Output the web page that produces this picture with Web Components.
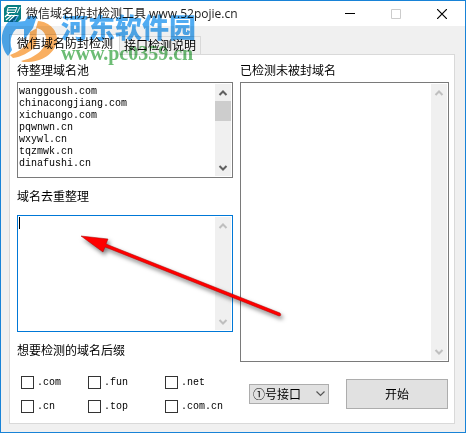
<!DOCTYPE html>
<html lang="zh-CN">
<head>
<meta charset="UTF-8">
<meta name="viewport" content="width=device-width, initial-scale=1">
<title>微信域名防封检测工具</title>
<style>
  body {
    margin: 0;
    font: 12px/16px "Liberation Sans", "Noto Sans CJK SC", sans-serif;
    color: #000;
  }
</style>
</head>
<body>
<app-window heading="微信域名防封检测工具 www.52pojie.cn">
  <tab-panel>
    <div slot="left">
      <text-field label="待整理域名池" style="--field-height: 96px" thumb>wanggoush.com
chinacongjiang.com
xichuango.com
pqwnwn.cn
wxywl.cn
tqzmwk.cn
dinafushi.cn</text-field>
      <text-field label="域名去重整理" style="--field-height: 117px; --label-gap: 10px" active></text-field>
      <suffix-group label="想要检测的域名后缀" options=".com,.fun,.net,.cn,.top,.com.cn"></suffix-group>
    </div>
    <div slot="right">
      <text-field label="已检测未被封域名" style="--field-height: 280px"></text-field>
      <action-bar></action-bar>
    </div>
  </tab-panel>
  <site-mark slot="overlay"></site-mark>
  <pointer-arrow slot="overlay"></pointer-arrow>
</app-window>

<script>
class AppWindow extends HTMLElement {
  constructor() {
    super();
    this.attachShadow({ mode: 'open' });
  }

  connectedCallback() {
    this.shadowRoot.innerHTML = `
      <style>
        :host {
          display: flex;
          flex-direction: column;
          position: relative;
          box-sizing: border-box;
          min-height: 100vh;
          border: 1px solid #1883d7;
          background: #f0f0f0;
        }
        header {
          display: flex;
          align-items: center;
          height: 25px;
          padding-left: 3px;
          background: #fff;
        }
        h1 {
          flex: 1;
          margin: 0 0 0 5px;
          font: 12px/16px "Open Sans", "Noto Sans CJK SC", sans-serif;
          color: #222;
          white-space: nowrap;
        }
        button {
          width: 46px;
          height: 25px;
          padding: 0;
          border: 0;
          background: none;
        }
        button svg { display: block; margin: auto; }
        main { padding: 8px 10px 7px 8px; }
      </style>
      <header>
        <svg width="17" height="17" viewBox="0 0 17 17" aria-hidden="true">
          <path d="M0 3L3 0H17V14L14 17H0Z" fill="#087f83"/>
          <path d="M4 2.500H13L11 7.500H3ZM4 5H12" fill="none" stroke="#fff"/>
          <path d="M5 8L1 12M3 10.500H14L11 16H9M8 10L2 15M11 10L5 16" fill="none" stroke="#fff" stroke-width="1.200"/>
          <path d="M16 2L13 8" stroke="#fff"/>
        </svg>
        <h1>${this.getAttribute('heading')}</h1>
        <button aria-label="最小化"><svg width="10" height="10"><path d="M0 4.5H10" stroke="#000"/></svg></button>
        <button aria-label="最大化" disabled><svg width="10" height="10"><path d="M.5 .5H9.5V9.5H.5Z" fill="none" stroke="#ccc"/></svg></button>
        <button aria-label="关闭"><svg width="10" height="10"><path d="M0 0L10 10M10 0L0 10" stroke="#000" stroke-width="1.2"/></svg></button>
      </header>
      <main><slot></slot></main>
      <slot name="overlay"></slot>
    `;
  }
}

class TabPanel extends HTMLElement {
  constructor() {
    super();
    this.attachShadow({ mode: 'open' });
  }

  connectedCallback() {
    this.shadowRoot.innerHTML = `
      <style>
        :host { display: block; }
        nav { display: flex; align-items: flex-end; }
        button {
          height: 18px;
          padding: 1px 4px 0;
          border: 1px solid #d9d9d9;
          border-bottom: 0;
          border-left: 0;
          background: #f0f0f0;
          font: inherit;
          color: inherit;
          white-space: nowrap;
        }
        button[aria-selected="true"] {
          height: 21px;
          margin-bottom: -1px;
          padding: 0 6px 2px 7px;
          border-left: 1px solid #d9d9d9;
          background: #fff;
          position: relative;
        }
        section {
          display: grid;
          grid-template-columns: 216fr 209fr;
          gap: 7px;
          padding: 8px 5px 10px 7px;
          border: 1px solid #d9d9d9;
          background: #fff;
        }
        ::slotted(div) {
          display: flex;
          flex-direction: column;
          gap: 11px;
          min-width: 0;
        }
      </style>
      <nav role="tablist">
        <button role="tab" aria-selected="true">微信域名防封检测</button>
        <button role="tab" aria-selected="false">接口检测说明</button>
      </nav>
      <section role="tabpanel">
        <slot name="left"></slot>
        <slot name="right"></slot>
      </section>
    `;
  }
}

class ScrollTrack extends HTMLElement {
  constructor() {
    super();
    this.attachShadow({ mode: 'open' });
  }

  connectedCallback() {
    this.shadowRoot.innerHTML = `
      <style>
        :host {
          display: flex;
          flex-direction: column;
          flex: none;
          width: 16px;
          margin: 1px;
          background: #f0f0f0;
          color: #bfbfbf;
        }
        :host([thumb]) { color: #606060; }
        svg { flex: none; display: block; }
        .thumb { display: none; height: 20px; background: #cdcdcd; }
        :host([thumb]) .thumb { display: block; }
        .space { flex: 1; }
      </style>
      <svg width="16" height="17"><path d="M4.5 11L8 7.5L11.5 11" fill="none" stroke="currentColor" stroke-width="2"/></svg>
      <div class="thumb"></div>
      <div class="space"></div>
      <svg width="16" height="17"><path d="M4.5 7L8 10.5L11.5 7" fill="none" stroke="currentColor" stroke-width="2"/></svg>
    `;
  }
}

class TextField extends HTMLElement {
  constructor() {
    super();
    this.attachShadow({ mode: 'open' });
  }

  connectedCallback() {
    this.shadowRoot.innerHTML = `
      <style>
        :host { display: block; }
        label { display: block; margin-bottom: var(--label-gap, 3px); }
        .box {
          display: flex;
          position: relative;
          box-sizing: border-box;
          height: var(--field-height);
          border: 1px solid #7a7a7a;
          background: #fff;
        }
        :host([active]) .box { border-color: #0078d7; }
        textarea {
          flex: 1;
          min-width: 0;
          padding: 3px 1px;
          border: 0;
          outline: 0;
          resize: none;
          overflow: hidden;
          background: none;
          color: inherit;
          font: 10px/12px "Liberation Mono", "Noto Sans CJK SC", monospace;
        }
        .caret { display: none; }
        :host([active]) .caret {
          display: block;
          position: absolute;
          top: 1px;
          left: 1px;
          width: 1px;
          height: 12px;
          background: #000;
        }
      </style>
      <label for="area">${this.getAttribute('label')}</label>
      <div class="box">
        <textarea id="area" spellcheck="false"></textarea>
        <span class="caret"></span>
        <scroll-track ${this.hasAttribute('thumb') ? 'thumb' : ''}></scroll-track>
      </div>
    `;
    this.shadowRoot.getElementById('area').value = this.textContent.trim();
  }
}

class SuffixGroup extends HTMLElement {
  constructor() {
    super();
    this.attachShadow({ mode: 'open' });
  }

  connectedCallback() {
    const options = this.getAttribute('options').split(',');
    this.shadowRoot.innerHTML = `
      <style>
        :host { display: block; }
        fieldset { margin: 0; padding: 0; border: 0; min-width: 0; }
        legend { padding: 0; margin-bottom: 15px; }
        .grid {
          display: grid;
          grid-template-columns: 67px 77px 1fr;
          row-gap: 9px;
          padding-left: 4px;
        }
        label {
          display: flex;
          align-items: flex-end;
          gap: 3px;
          height: 15px;
          font: 10px/12px "Liberation Mono", monospace;
        }
        input {
          appearance: none;
          box-sizing: border-box;
          width: 13px;
          height: 13px;
          margin: 0;
          border: 1px solid #333;
          background: #fff;
        }
        input:checked { background: #333; box-shadow: inset 0 0 0 2px #fff; }
      </style>
      <fieldset>
        <legend>${this.getAttribute('label')}</legend>
        <div class="grid">
          ${options.map((o) => `<label><input type="checkbox" value="${o}">${o}</label>`).join('')}
        </div>
      </fieldset>
    `;
  }
}

class ActionBar extends HTMLElement {
  constructor() {
    super();
    this.attachShadow({ mode: 'open' });
  }

  connectedCallback() {
    this.shadowRoot.innerHTML = `
      <style>
        :host {
          display: flex;
          align-items: center;
          justify-content: space-between;
          margin-top: 6px;
          padding: 0 1px 0 9px;
        }
        .pick { display: grid; align-items: center; }
        .pick > * { grid-area: 1 / 1; }
        .pick svg { justify-self: end; margin-right: 4px; pointer-events: none; }
        select, button {
          box-sizing: border-box;
          border: 1px solid #adadad;
          border-radius: 0;
          background: #e1e1e1;
          font: inherit;
          color: inherit;
        }
        select { appearance: none; width: 80px; height: 20px; padding: 2px 3px 0; }
        button { width: 102px; height: 30px; padding: 2px 0 0; }
      </style>
      <div class="pick">
        <select aria-label="接口">
          <option>①号接口</option>
        </select>
        <svg width="9" height="6"><path d="M.5 .5L4.5 4.5L8.5 .5" fill="none" stroke="#555" stroke-width="1.2"/></svg>
      </div>
      <button>开始</button>
    `;
  }
}

class SiteMark extends HTMLElement {
  constructor() {
    super();
    this.attachShadow({ mode: 'open' });
  }

  connectedCallback() {
    this.shadowRoot.innerHTML = `
      <style>
        :host {
          display: flex;
          position: absolute;
          top: 10px;
          left: 0;
          gap: 3px;
          opacity: 0.75;
          mix-blend-mode: multiply;
          pointer-events: none;
          white-space: nowrap;
        }
        .name {
          font: 900 27px/32px "Noto Sans CJK SC", sans-serif;
          color: #1690ee;
        }
        .site {
          font: bold 20px/20px "Liberation Serif", serif;
          color: #3aa545;
        }
      </style>
      <svg width="57" height="52" viewBox="0 0 57 52" aria-hidden="true">
        <path d="M18 4C4 9 -2 23 2 36C3 40 5 43 7 45L11 39C8 31 10 23 15 18L23 18V29L32 17L36 5H27L24 10L15 11Z" fill="#1690ee"/>
        <path d="M37 10C49 11 57 20 56 30C54 43 40 52 22 51L20 50C34 47 45 38 45 28C45 22 41 18 35 17Z" fill="#f7942b"/>
        <path d="M29 21L36 17L35 35C28 42 20 46 12 47L9 44C17 41 24 36 28 31Z" fill="#f7942b"/>
      </svg>
      <div>
        <div class="name">河东软件园</div>
        <div class="site">www.pc0359.cn</div>
      </div>
    `;
  }
}

class PointerArrow extends HTMLElement {
  constructor() {
    super();
    this.attachShadow({ mode: 'open' });
  }

  connectedCallback() {
    this.shadowRoot.innerHTML = `
      <style>
        :host {
          display: block;
          position: absolute;
          top: 229px;
          left: 75px;
          pointer-events: none;
        }
        svg { display: block; filter: drop-shadow(2px 3px 2px rgba(0, 0, 0, 0.5)); }
      </style>
      <svg width="216" height="98" aria-hidden="true">
        <path d="M5 6L32 9L30 14L204 83Q206 86 203 86L29 17L27 22Z" fill="#f00" stroke="#a00" stroke-width=".5"/>
      </svg>
    `;
  }
}

customElements.define('scroll-track', ScrollTrack);
customElements.define('text-field', TextField);
customElements.define('suffix-group', SuffixGroup);
customElements.define('action-bar', ActionBar);
customElements.define('tab-panel', TabPanel);
customElements.define('site-mark', SiteMark);
customElements.define('pointer-arrow', PointerArrow);
customElements.define('app-window', AppWindow);
</script>
</body>
</html>
